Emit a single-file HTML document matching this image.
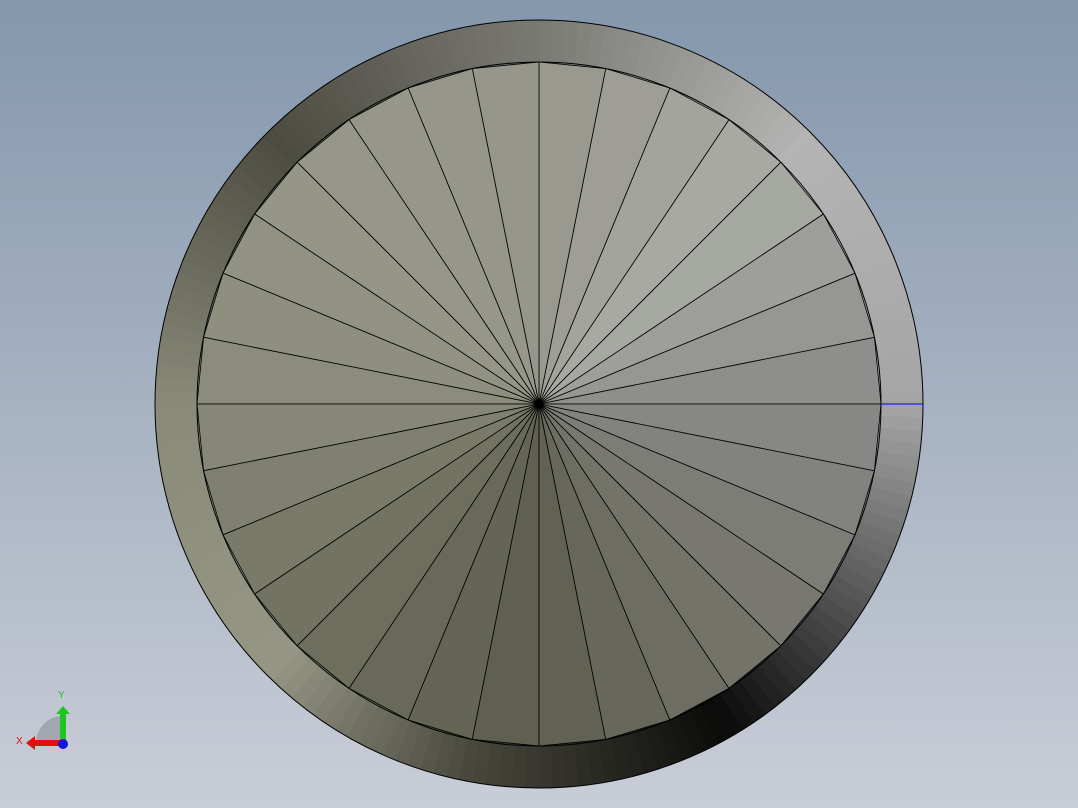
<!DOCTYPE html>
<html><head><style>
html,body{margin:0;padding:0;width:1078px;height:808px;overflow:hidden}
body{background:linear-gradient(#8497ad,#c9cdd7)}
svg{position:absolute;left:0;top:0}
</style></head><body>
<svg id="s" width="1078" height="808" xmlns="http://www.w3.org/2000/svg">
<g id="ring"></g><g id="tri"></g>
<circle cx="539" cy="404" r="384" fill="none" stroke="#000" stroke-width="1"/>
<circle cx="539" cy="404" r="342" fill="none" stroke="#000" stroke-width="1"/>
<line x1="881" y1="404" x2="923" y2="404" stroke="#00f" stroke-width="1"/>
<path d="M63 743 L36 743 A27 27 0 0 1 63 716 Z" fill="#a2a6ae"/>
<rect x="60" y="713" width="6" height="30" fill="#1ec51e"/>
<polygon points="56,714 63,706 70,714" fill="#1ec51e"/>
<rect x="34" y="740" width="29" height="6" fill="#e01010"/>
<polygon points="35,736 26,743 35,750" fill="#e01010"/>
<circle cx="63" cy="744" r="5" fill="#1515e0"/>
<text x="58" y="698" font-family="Liberation Sans,sans-serif" font-size="10" fill="#1ec51e">Y</text>
<text x="16" y="744" font-family="Liberation Sans,sans-serif" font-size="10" fill="#e01010">X</text>
</svg>
<script>
function lerp(keys,a){a=((a%360)+360)%360;for(let i=0;i<keys.length-1;i++){const[k0,c0]=keys[i],[k1,c1]=keys[i+1];if(a>=k0&&a<=k1){const t=(a-k0)/(k1-k0);return 'rgb('+c0.map((v,j)=>Math.round(v+(c1[j]-v)*t)).join(',')+')';}}}
const ringK=[[0,[165,165,165]],[45,[180,180,180]],[90,[122,122,116]],[135,[76,76,66]],[180,[138,138,120]],[225,[150,150,132]],[260,[70,70,60]],[300,[10,10,10]],[330,[90,90,90]],[360,[165,165,165]]];
const triK=[[0,[138,138,136]],[45,[170,172,166]],[90,[150,150,140]],[135,[150,150,138]],[180,[138,138,122]],[225,[112,112,94]],[270,[94,94,80]],[315,[118,118,110]],[360,[138,138,136]]];
const cx=539,cy=404,R=384,r=342;let rs='',ts='';
const N=180;for(let i=0;i<N;i++){const a0=i*360/N,a1=(i+1.2)*360/N;const p=(a,rad)=>[cx+rad*Math.cos(a*Math.PI/180),cy-rad*Math.sin(a*Math.PI/180)];const A=p(a0,R),B=p(a1,R);
rs+=`<polygon points="${cx},${cy} ${A} ${B}" fill="${lerp(ringK,a0+1)}"/>`;}
for(let i=0;i<32;i++){const a0=i*11.25,a1=(i+1)*11.25;const p=a=>[cx+r*Math.cos(a*Math.PI/180),cy-r*Math.sin(a*Math.PI/180)];
ts+=`<polygon points="${cx},${cy} ${p(a0)} ${p(a1)}" fill="${lerp(triK,a0+5.6)}" stroke="#000" stroke-width="0.8"/>`;}
document.getElementById('ring').innerHTML=rs;document.getElementById('tri').innerHTML=ts;
</script>
</body></html>
